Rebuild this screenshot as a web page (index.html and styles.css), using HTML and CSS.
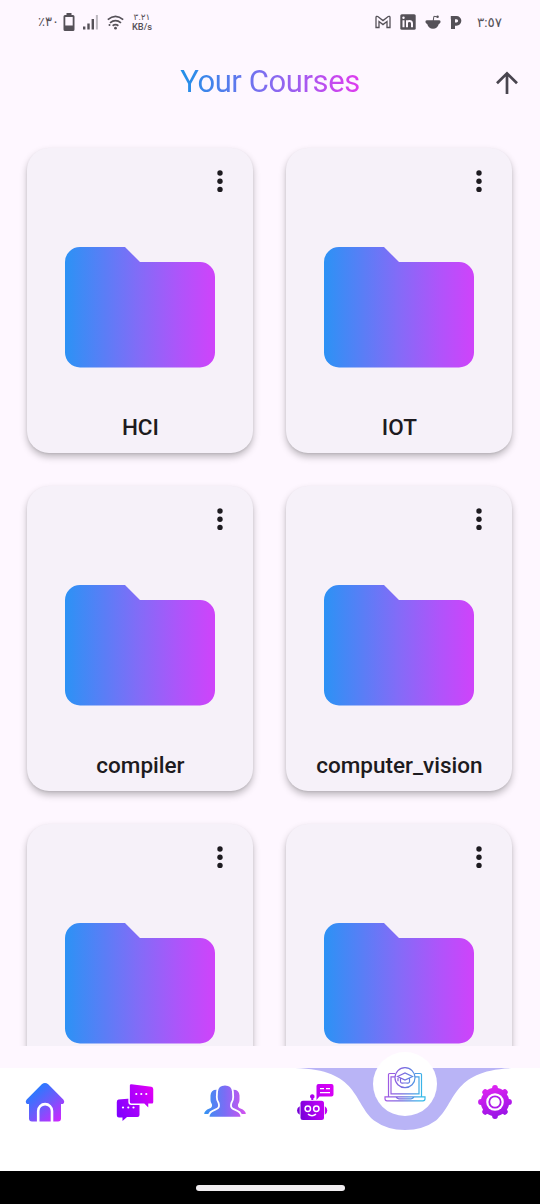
FILE: index.html
```html
<!DOCTYPE html>
<html lang="en">
<head>
<meta charset="utf-8">
<title>Your Courses</title>
<link rel="stylesheet" href="styles.css">
</head>
<body>
<svg class="defs" width="0" height="0" aria-hidden="true">
  <defs>
    <linearGradient id="folderFill" x1="0" x2="1" y1="0" y2="0"><stop offset="0" stop-color="#2c92f5"/><stop offset=".5" stop-color="#846bf7"/><stop offset=".78" stop-color="#b153fa"/><stop offset="1" stop-color="#cf43fa"/></linearGradient>
    <symbol id="folder" viewBox="0 0 150 121"><path fill="url(#folderFill)" d="M15 0H60L75 15H135A15 15 0 0 1 150 30V105.500A15 15 0 0 1 135 120.500H15A15 15 0 0 1 0 105.500V15A15 15 0 0 1 15 0Z"/></symbol>
    <symbol id="more" viewBox="0 0 8 24"><g fill="#1d1b20"><circle cx="4" cy="4" r="2.700"/><circle cx="4" cy="12.200" r="2.700"/><circle cx="4" cy="20.400" r="2.700"/></g></symbol>
  </defs>
</svg>
<div class="screen">
  <div class="status">
    <div class="status-left">
      <span class="battery-text"><bdo dir="ltr">٪٣٠</bdo></span>
      <svg class="battery" width="12" height="18" viewBox="0 0 12 18"><path d="M3.500 0h5v2H10a1.500 1.500 0 0 1 1.500 1.500v13A1.500 1.500 0 0 1 10 18H2A1.500 1.500 0 0 1 .5 16.500v-13A1.500 1.500 0 0 1 2 2h1.500zM2.300 4v8.500h7.400V4z" fill="#555158" fill-rule="evenodd"/></svg>
      <svg class="signal" width="16" height="15" viewBox="0 0 16 15"><g fill="#555158"><rect x="0" y="11.500" width="2.400" height="3"/><rect x="4.300" y="8.500" width="2.400" height="6"/><rect x="8.600" y="4" width="2.400" height="10.500"/></g><rect x="12.900" y="0" width="2" height="14.500" fill="#bdb8c0"/></svg>
      <svg class="wifi" width="17" height="15" viewBox="0 0 17 15"><g fill="none" stroke="#555158" stroke-width="1.700"><path d="M.8 4.700Q8.500-1.900 16.200 4.700M3 7.900Q8.500 3.400 14 7.900M5.600 10.800Q8.500 8.600 11.400 10.800"/></g><circle cx="8.500" cy="13.200" r="1.400" fill="#555158"/><circle cx="2.500" cy="10" r="1" fill="#555158"/></svg>
      <span class="speed"><bdo dir="ltr">٣.٢١</bdo><b>KB/s</b></span>
    </div>
    <div class="status-right">
      <svg width="16" height="14" viewBox="0 0 16 14"><path d="M1 12.500V2.300Q1.200.8 2.800 1.500L8 5.600l5.200-4.100Q14.800.8 15 2.300v10.200h-3V6.500L8 9.600 4 6.500v6z" fill="none" stroke="#555158" stroke-width="1.300"/></svg>
      <svg width="16" height="16" viewBox="0 0 16 16"><rect x=".3" y=".3" width="15.400" height="15.400" rx="1.500" fill="#555158"/><g fill="none" stroke="#fef7ff" stroke-width="2"><path d="M3.500 6.300v7M7 13.300v-7M7 9q0-2 2.400-2t2.600 2.300v4"/></g><circle cx="3.500" cy="3.700" r="1.200" fill="#fef7ff"/></svg>
      <svg width="16" height="16" viewBox="0 0 16 16"><path d="M2.300 6.300H13.700Q16.200 6.200 15.300 8.800q-.5 1-1.500 1.200Q12.500 14.700 8 14.700T2.200 10Q1.200 9.800.7 8.800-.2 6.200 2.300 6.300Z" fill="#555158"/><path d="M8.200 7l.7-4.700 3 .5" fill="none" stroke="#555158" stroke-width="1"/><circle cx="12.600" cy="2.700" r="1.200" fill="#555158"/></svg>
      <svg class="p-icon" width="12" height="15" viewBox="0 0 12 15"><path fill="#555158" fill-rule="evenodd" d="M.8 1H6.500a4.700 4.700 0 0 1 0 9.700H5V14H1V4.200H.8zM5 4.200v3.200h1.500a1.600 1.600 0 0 0 0-3.200z"/></svg>
      <span class="clock"><bdo dir="ltr">٣:٥٧</bdo></span>
    </div>
  </div>

  <header class="header">
    <h1 class="title">Your Courses</h1>
    <svg class="up" width="24" height="24" viewBox="0 0 24 24"><path d="M12 23V2.500M2 12.300L12 2.300l10 10" fill="none" stroke="#49454f" stroke-width="2.700"/></svg>
  </header>

  <main class="courses">
    <article class="card"><svg class="more"><use href="#more"/></svg><svg class="folder"><use href="#folder"/></svg><h2 class="name">HCI</h2></article>
    <article class="card"><svg class="more"><use href="#more"/></svg><svg class="folder"><use href="#folder"/></svg><h2 class="name">IOT</h2></article>
    <article class="card"><svg class="more"><use href="#more"/></svg><svg class="folder"><use href="#folder"/></svg><h2 class="name">compiler</h2></article>
    <article class="card"><svg class="more"><use href="#more"/></svg><svg class="folder"><use href="#folder"/></svg><h2 class="name">computer_vision</h2></article>
    <article class="card"><svg class="more"><use href="#more"/></svg><svg class="folder"><use href="#folder"/></svg></article>
    <article class="card"><svg class="more"><use href="#more"/></svg><svg class="folder"><use href="#folder"/></svg></article>
  </main>

  <nav class="nav">
    <svg class="notch" width="220" height="63" viewBox="0 0 220 63"><path fill="#b9b4f6" d="M0 0C64 1.500 58 34.500 79 52.500Q92 62 110 62T141 52.500C162 34.500 156 1.500 220 0Z"/></svg>
    <a class="tab">
      <svg width="40" height="40" viewBox="0 0 40 40"><defs><linearGradient id="home" x1=".15" y1=".2" x2=".85" y2="1"><stop offset="0" stop-color="#247cff"/><stop offset=".5" stop-color="#7059fb"/><stop offset="1" stop-color="#cb28ff"/></linearGradient></defs><path fill="url(#home)" d="M16.800 2.300Q20-.5 23.200 2.300L38.300 17.500Q40.300 20 38 22H36v14.500a3 3 0 0 1-3 3H7a3 3 0 0 1-3-3V22H2Q-.3 20 1.700 17.500Z"/><path d="M13.200 40V29a6.900 6.900 0 0 1 13.800 0V40" fill="none" stroke="#fff" stroke-width="2.600"/></svg>
    </a>
    <a class="tab">
      <svg width="40" height="40" viewBox="0 0 40 40"><defs><linearGradient id="chat" gradientUnits="userSpaceOnUse" x1="2" y1="30" x2="38" y2="10"><stop offset="0" stop-color="#8000ff"/><stop offset=".6" stop-color="#b400fb"/><stop offset="1" stop-color="#df00f5"/></linearGradient></defs><g fill="url(#chat)"><path d="M3.500 17.500L22 16q2.500 0 2.500 2.500V33q0 2-2 2H12l-4.500 4V35.500H4q-2.200 0-2.200-2.200V20q0-2.300 1.700-2.500Z"/><path stroke="#fff" stroke-width="1.500" d="M16.500 1.400L36.500 4Q39 4.500 39 7v13q0 2.300-2 2.300h-3v5L29 22.300H16.300q-2.200 0-2.200-2.200V3.500q0-2.200 2.400-2.100Z"/></g><g fill="#fff"><circle cx="21.300" cy="12" r="1.100"/><circle cx="26.300" cy="12" r="1.100"/><circle cx="31.300" cy="12" r="1.100"/><circle cx="8" cy="25.500" r="1.100"/><circle cx="13.300" cy="25.500" r="1.100"/><circle cx="18.500" cy="25.500" r="1.100"/></g></svg>
    </a>
    <a class="tab">
      <svg width="44" height="40" viewBox="0 0 44 40"><defs><linearGradient id="people" gradientUnits="userSpaceOnUse" x1="1" x2="43" y1="0" y2="0"><stop offset="0" stop-color="#3294f2"/><stop offset=".5" stop-color="#7b6df5"/><stop offset="1" stop-color="#d651ef"/></linearGradient></defs><g fill="url(#people)"><path d="M16 8Q8 6.500 7.500 13.500V18Q7.500 20.500 9 22.500 9.500 25.500 6.500 26.500 1.300 28.500 1.200 32H16V10Z"/><path d="M28 8Q36 6.500 36.500 13.500V18Q36.500 20.500 35 22.500 34.500 25.500 37.500 26.500 42.700 28.500 42.800 32H28Z"/><path stroke="#fff" stroke-width="1.800" d="M22 2.500Q29.500 2.500 29.900 9.500L30.200 15Q30.300 18 28.400 21 27 25.500 30 26.800C35 29 38.500 30 38.500 35.600H5.500C5.500 30 9 29 14 26.800Q17 25.500 15.600 21 13.700 18 13.800 15L14.100 9.500Q14.500 2.500 22 2.500Z"/></g></svg>
    </a>
    <a class="tab">
      <svg width="40" height="40" viewBox="0 0 40 40"><defs><linearGradient id="bot" gradientUnits="userSpaceOnUse" x1="3" y1="26" x2="36" y2="16"><stop offset="0" stop-color="#7600d8"/><stop offset=".55" stop-color="#b300f2"/><stop offset="1" stop-color="#d600f5"/></linearGradient></defs><g fill="url(#bot)"><rect x="5.500" y="18.700" width="23.500" height="19.300" rx="2.500"/><path d="M4.700 24.300v8.400Q2 31.500 2 28.500t2.700-4.200ZM29.800 24.300v8.400q2.500-1.200 2.500-4.200T29.800 24.300ZM15 14.600a2.300 2.300 0 1 1 3.300 2V18h-2v-1.500A2.300 2.300 0 0 1 15 14.600ZM23.500 2H36.500q2 0 2 2v8.500q0 2-2 2H24.500L21.500 18V4q0-2 2-2Z"/></g><g fill="none" stroke="#fff" stroke-width="1.500"><circle cx="12.800" cy="26.800" r="2.700"/><circle cx="21.300" cy="26.800" r="2.700"/><path d="M13 32.200q4 3.200 8 0"/></g><path d="M25 6.600h4m2 0h4M25 10.700h10" stroke="#fff" stroke-width="1.300"/></svg>
    </a>
    <a class="tab">
      <span class="bubble"><svg width="44" height="44" viewBox="0 0 44 44"><defs><linearGradient id="study" gradientUnits="userSpaceOnUse" x1="2" y1="0" x2="42" y2="5"><stop offset="0" stop-color="#af56e5"/><stop offset=".5" stop-color="#7868df"/><stop offset="1" stop-color="#35b9e8"/></linearGradient></defs><g fill="none" stroke="url(#study)" stroke-width="1.200"><path d="M5.500 34.500V12.500q0-1 1-1H12M32 11.500h5.500q1 0 1 1v22M12 14.800H8v17h28v-17h-4M2 34.800h40v2q0 2-2 2H4q-2 0-2-2ZM13 35q1 1.800 3 1.800h12q2 0 3-1.800"/><circle cx="22" cy="15.700" r="10"/><path d="M14.500 14.500l7.500-3.500 7.500 3.500-7.500 3.500ZM17.500 16v4q1 1.700 3 1h3q2 .7 3-1v-4M15 14.700v4.500"/></g></svg></span>
    </a>
    <a class="tab">
      <svg width="40" height="40" viewBox="0 0 40 40"><defs><linearGradient id="gear" gradientUnits="userSpaceOnUse" x1="14" y1="3" x2="24" y2="37"><stop offset="0" stop-color="#e225f2"/><stop offset="1" stop-color="#9512e5"/></linearGradient></defs><circle cx="20" cy="20" r="14.200" fill="url(#gear)"/><path stroke="url(#gear)" stroke-width="5.800" stroke-linecap="round" d="M20 6V10M20 30v4M6 20H10M30 20h4M10.200 10.200l3 3M26.800 26.800l3 3M29.800 10.200l-3 3M13.200 26.800l-3 3"/><circle cx="20" cy="20" r="8.800" fill="#fff"/><circle cx="20" cy="20" r="5.700" fill="none" stroke="#ae1ce9" stroke-width="1.800"/></svg>
    </a>
  </nav>
  <footer class="system"><span class="handle"></span></footer>
</div>
</body>
</html>
```

FILE: styles.css
```css
* { box-sizing: border-box; }
body { margin: 0; font-family: Roboto, "Liberation Sans", sans-serif; color: #1d1b20; }
.defs { display: block; }
svg { display: block; flex: none; }
h1, h2 { margin: 0; }
.screen { width: 540px; height: 1204px; display: flex; flex-direction: column; background: #fef7ff; overflow: hidden; }

.status { height: 44px; flex: none; display: flex; justify-content: space-between; padding: 0 37px 0 38px; color: #555158; font-family: Roboto, "DejaVu Sans", sans-serif; }
.status-left, .status-right { display: flex; align-items: center; height: 44px; }
.battery-text { width: 25px; font-size: 13px; line-height: 20px; white-space: nowrap; }
.signal { margin-left: 8px; }
.wifi { margin-left: 8px; }
.speed { display: flex; flex-direction: column; align-items: center; width: 22px; margin-left: 7px; font-size: 9px; line-height: 10px; }
.speed b { font-weight: 500; font-size: 9.3px; }
.status-right { gap: 8.7px; }
.p-icon { margin-left: 1px; }
.clock { width: 26px; margin-left: 6px; font-size: 13.5px; line-height: 20px; white-space: nowrap; }

.header { height: 76px; flex: none; display: grid; grid-template-columns: 1fr auto 1fr; align-items: center; padding: 0 21px; }
.title { grid-column: 2; font-size: 31px; letter-spacing: -.4px; font-weight: 400; line-height: 40px; color: transparent; background: linear-gradient(90deg, #2090e8, #846bf0 50%, #df3bee); -webkit-background-clip: text; background-clip: text; }
.up { justify-self: end; margin-top: 1px; }

.courses { height: 926px; flex: none; display: grid; grid-template-columns: 226px 226px; grid-auto-rows: 305px; gap: 33px; align-content: start; padding: 28px 27px 0 27.4px; overflow: hidden; }
.card { display: flex; flex-direction: column; align-items: center; padding-top: 21px; border-radius: 22px; background: #f6f1f9; box-shadow: 0 4px 7px rgba(0, 0, 0, .25), 0 1px 2px rgba(0, 0, 0, .08); }
.more { width: 8px; height: 24px; align-self: flex-end; margin-right: 29px; }
.folder { width: 150px; height: 121px; margin-top: 54px; }
.name { margin-top: 44px; font-size: 22.5px; line-height: 30px; font-weight: 500; }

.nav { position: relative; height: 103px; flex: none; margin-top: 22px; display: grid; grid-template-columns: repeat(6, 90px); background: #fff; }
.notch { position: absolute; left: 295px; top: 0; }
.tab { position: relative; display: flex; justify-content: center; padding-top: 14px; }
.bubble { position: absolute; left: 13px; top: -16px; width: 64px; height: 64px; display: grid; place-items: center; border-radius: 50%; background: #fff; }
.system { height: 33px; flex: none; display: grid; place-items: center; background: #000; }
.handle { width: 149px; height: 6px; border-radius: 3px; background: #f0edf0; }
```
